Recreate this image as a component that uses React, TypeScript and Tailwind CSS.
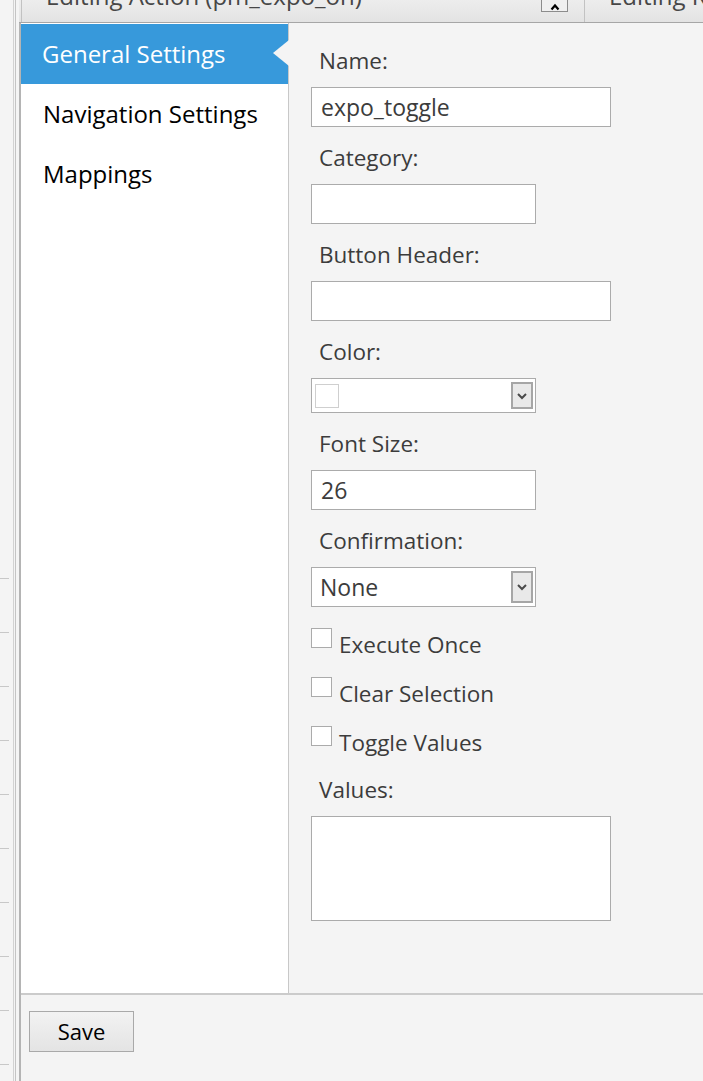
import React from "react";

const font = { fontFamily: '"Open Sans", "Noto Sans", sans-serif' };

function Chevron() {
  return (
    <svg width="12" height="8" viewBox="0 0 12 8">
      <polyline points="2,2 6,6 10,2" fill="none" stroke="#4a4a4a" strokeWidth="2" />
    </svg>
  );
}

function SelectBox({ h, children }: { h: string; children?: React.ReactNode }) {
  return (
    <div className={`flex ${h} w-[225px] items-center border border-[#ababab] bg-white pl-[3px] pr-[2px]`}>
      <div className="flex flex-1 items-center">{children}</div>
      <div className="flex h-[calc(100%-6px)] w-[22px] items-center justify-center border-2 border-[#a6a6a6] bg-[#e9e9e9]">
        <Chevron />
      </div>
    </div>
  );
}

function Label({ text, first }: { text: string; first?: boolean }) {
  return (
    <div className={`${first ? "mt-0" : "mt-[16px]"} mb-[11px] h-[30px] pl-[8px] text-[22.5px] leading-[30px] text-[#3c3c3c] whitespace-nowrap`}>
      {text}
    </div>
  );
}

function Check({ text }: { text: string }) {
  return (
    <div className="flex h-[49px] items-start">
      <div className="h-[20px] w-[21px] border border-[#ababab] bg-white" />
      <div className="mt-[2px] pl-[7px] text-[22.5px] leading-[30px] text-[#3c3c3c] whitespace-nowrap">{text}</div>
    </div>
  );
}

export default function App() {
  const ticks = Array.from({ length: 10 });
  return (
    <div className="flex h-[1081px] w-[703px] overflow-hidden bg-[#f4f4f4]" style={font}>
      {/* left edge */}
      <div className="flex h-full w-[19px] shrink-0">
        <div className="flex w-[13px] flex-col pt-[578px]">
          {ticks.map((_, i) => (
            <div key={i} className="h-[54px] w-[9px] shrink-0 border-t border-[#c8c8c8]" />
          ))}
        </div>
        <div className="w-px bg-[#d2d2d2]" />
        <div className="w-px" />
        <div className="w-px bg-[#c4c4c4]" />
        <div className="w-[3px]" />
      </div>

      {/* main */}
      <div className="flex min-w-0 flex-1 flex-col">
        {/* tab strip */}
        <div className="flex h-[23px] shrink-0 border-b border-[#a6a6a6] bg-gradient-to-b from-[#ededed] to-[#e3e3e3] pl-[2px]">
          <div className="relative flex w-[564px] shrink-0 border-l border-r border-[#c2c2c2]">
            <div className="-mt-[20px] pl-[24px] text-[24px] leading-[32px] text-[#474747] whitespace-nowrap">
              Editing Action (pm_expo_on)
            </div>
            <div className="absolute left-[519px] top-0 flex h-[12px] w-[27px] items-end justify-center border border-t-0 border-[#8c8c8c] bg-[#f0f0f0]">
              <svg width="10" height="8" viewBox="0 0 10 8">
                <polyline points="1.5,6.5 5,2.5 8.5,6.5" fill="none" stroke="#000" strokeWidth="2.2" />
              </svg>
            </div>
          </div>
          <div className="-mt-[20px] pl-[24px] text-[24px] leading-[32px] text-[#474747] whitespace-nowrap">
            Editing R
          </div>
        </div>

        {/* panel */}
        <div className="flex flex-1 flex-col border-l-2 border-[#b4b4b4]">
          <div className="flex h-[970px] shrink-0">
            {/* nav */}
            <div className="flex w-[268px] shrink-0 flex-col border-r border-[#c8c8c8] bg-white pt-px">
              <div className="relative flex h-[60px] items-center bg-[#3799db] pl-[21px] text-[24px] text-white whitespace-nowrap">
                General Settings
                <div className="absolute right-[-1px] top-[16px] h-0 w-0 border-y-[13px] border-r-[16px] border-y-transparent border-r-[#f4f4f4]" />
              </div>
              <div className="flex h-[60px] items-center pl-[22px] text-[24px] text-black whitespace-nowrap">Navigation Settings</div>
              <div className="flex h-[60px] items-center pl-[22px] text-[24px] text-black">Mappings</div>
            </div>

            {/* form */}
            <div className="flex flex-1 flex-col pl-[22px] pt-[23px]">
              <Label text="Name:" first />
              <div className="flex h-[40px] w-[300px] items-center border border-[#ababab] bg-white pl-[9px] text-[23px] text-[#3c3c3c]">
                expo_toggle
              </div>
              <Label text="Category:" />
              <div className="h-[40px] w-[225px] border border-[#ababab] bg-white" />
              <Label text="Button Header:" />
              <div className="h-[40px] w-[300px] border border-[#ababab] bg-white" />
              <Label text="Color:" />
              <SelectBox h="h-[35px]">
                <div className="h-[24px] w-[24px] border border-[#cfcfcf] bg-white" />
              </SelectBox>
              <Label text="Font Size:" />
              <div className="flex h-[40px] w-[225px] items-center border border-[#ababab] bg-white pl-[9px] text-[23px] text-[#3c3c3c]">
                26
              </div>
              <Label text="Confirmation:" />
              <SelectBox h="h-[40px]">
                <span className="pl-[5px] text-[23px] text-[#3c3c3c]">None</span>
              </SelectBox>
              <div className="mt-[21px] flex flex-col">
                <Check text="Execute Once" />
                <Check text="Clear Selection" />
                <Check text="Toggle Values" />
              </div>
              <div className="mb-[11px] h-[30px] pl-[8px] text-[22.5px] leading-[30px] text-[#3c3c3c]">Values:</div>
              <div className="h-[105px] w-[300px] border border-[#ababab] bg-white" />
            </div>
          </div>

          {/* footer */}
          <div className="flex flex-1 flex-col border-t-2 border-[#cbcbcb] pl-[8px] pt-[16px]">
            <div className="flex h-[41px] w-[105px] items-center justify-center border border-[#a9a9a9] bg-gradient-to-b from-[#f2f2f2] to-[#e4e4e4] text-[22px] text-black">
              Save
            </div>
          </div>
        </div>
      </div>
    </div>
  );
}
